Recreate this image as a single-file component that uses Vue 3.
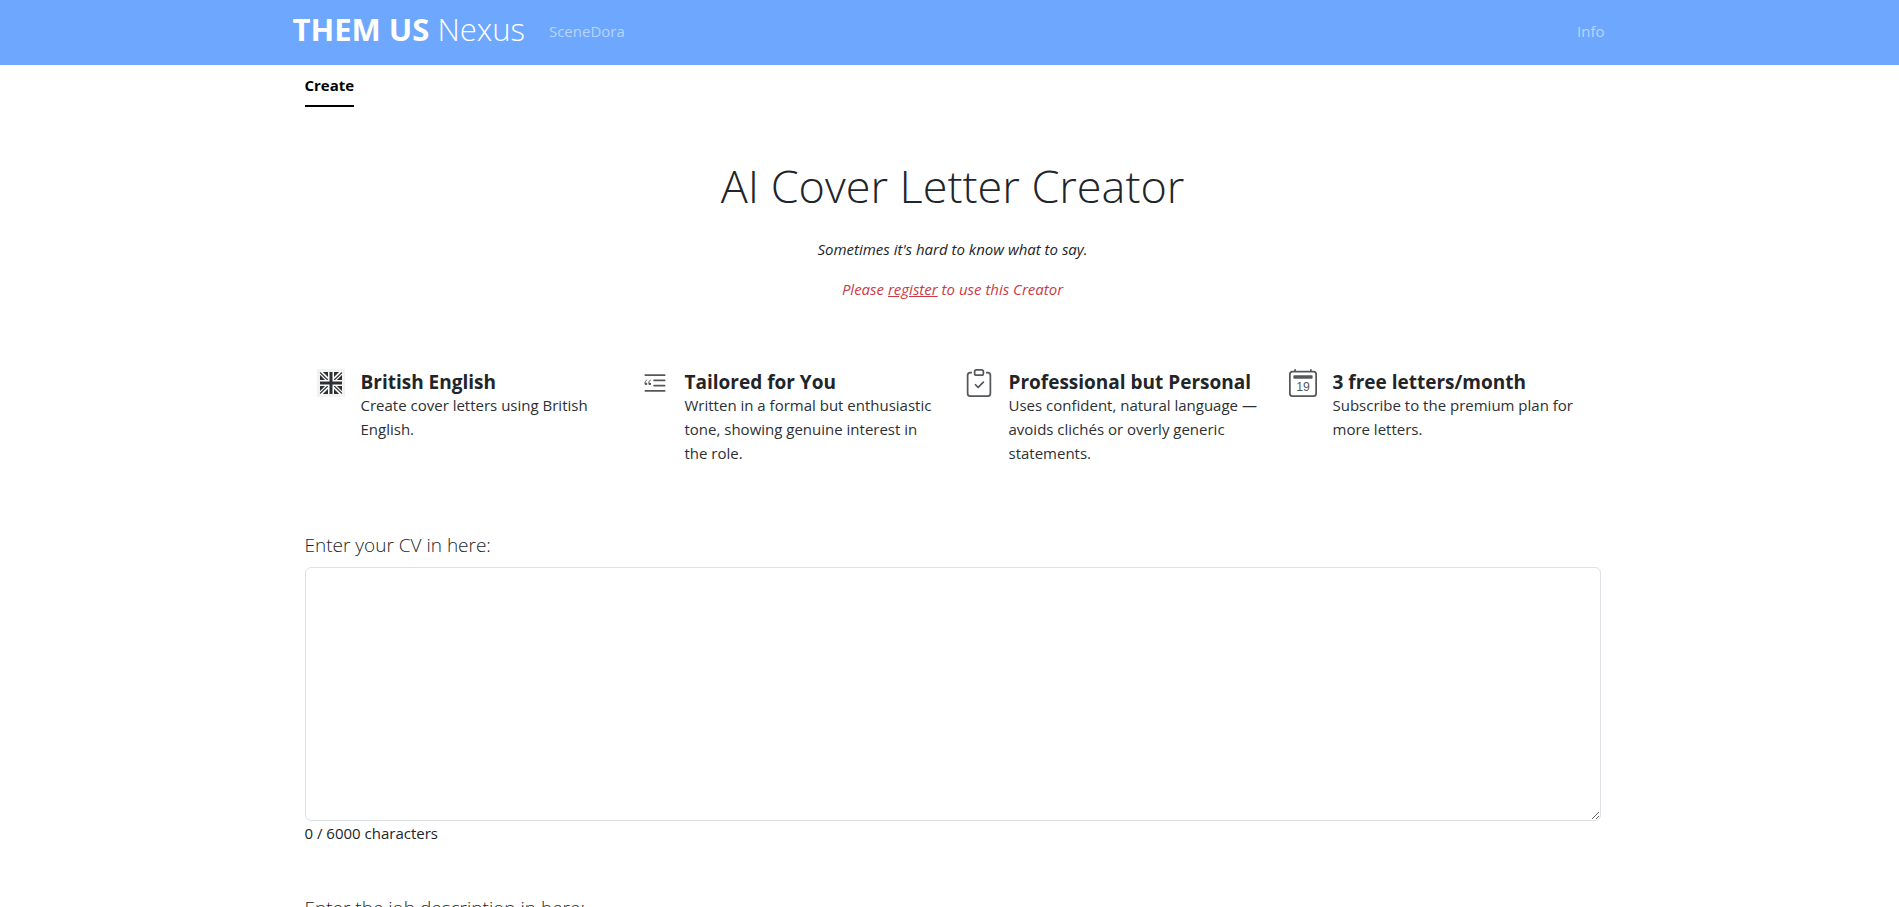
<script setup>
import { ref } from 'vue'

const cv = ref('')
const job = ref('')
const limit = 6000

const features = [
  { icon: 'flag', title: 'British English', text: 'Create cover letters using British English.' },
  { icon: 'quote', title: 'Tailored for You', text: 'Written in a formal but enthusiastic tone, showing genuine interest in the role.' },
  { icon: 'clipboard', title: 'Professional but Personal', text: 'Uses confident, natural language — avoids clichés or overly generic statements.' },
  { icon: 'calendar', title: '3 free letters/month', text: 'Subscribe to the premium plan for more letters.' },
]
</script>

<template>
  <div class="page">
    <header class="navbar">
      <nav class="container navbar-inner">
        <a class="brand" href="#"><strong>THEM US</strong> Nexus</a>
        <a class="nav-link" href="#">SceneDora</a>
        <a class="nav-link nav-end" href="#">Info</a>
      </nav>
    </header>

    <main class="container main">
      <nav class="tabs">
        <a class="tab" href="#">Create</a>
      </nav>

      <section class="hero">
        <h1>AI Cover Letter Creator</h1>
        <p>Sometimes it's hard to know what to say.</p>
        <p class="notice">Please <a href="#">register</a> to use this Creator</p>
      </section>

      <section class="features">
        <article v-for="f in features" :key="f.title" class="feature">
          <svg v-if="f.icon === 'flag'" class="icon" viewBox="0 0 28 28" aria-hidden="true">
            <rect width="28" height="28" fill="#f2f2f2" />
            <rect x="3" y="3" width="22" height="22" fill="#2e3033" />
            <path d="M3 3L25 25M25 3L3 25" stroke="#fff" stroke-width="4" />
            <path d="M3 3.500L25 24.500M25 3.500L3 24.500" stroke="#3b3e41" stroke-width="1.300" />
            <path d="M14 3V25M3 14H25" stroke="#fff" stroke-width="6" />
            <path d="M14 3V25M3 14H25" stroke="#2e3033" stroke-width="3" />
          </svg>
          <svg v-else-if="f.icon === 'quote'" class="icon" viewBox="0 0 16 16" fill="currentColor" aria-hidden="true">
            <path d="M2.500 3a.5.5 0 0 0 0 1h11a.5.5 0 0 0 0-1zm5 3a.5.5 0 0 0 0 1h6a.5.5 0 0 0 0-1zm0 3a.5.5 0 0 0 0 1h6a.5.5 0 0 0 0-1zm-5 3a.5.5 0 0 0 0 1h11a.5.5 0 0 0 0-1z" />
            <path id="quote-mark" d="M3.290 6.627q.168-.117.444-.275L3.524 6q-.183.111-.452.287-.27.176-.51.428a2.400 2.400 0 0 0-.398.562Q2 7.587 2 7.969q0 .54.217.873.217.328.72.328.322 0 .504-.211a.7.7 0 0 0 .188-.463q0-.345-.211-.521-.205-.182-.568-.182h-.282q.036-.305.123-.498a1.400 1.400 0 0 1 .252-.37 2 2 0 0 1 .346-.298z" />
            <use href="#quote-mark" x="2.168" />
          </svg>
          <svg v-else-if="f.icon === 'clipboard'" class="icon" viewBox="0 0 16 16" fill="currentColor" aria-hidden="true">
            <path d="M10.854 7.146a.5.5 0 0 1 0 .708l-3 3a.5.5 0 0 1-.708 0l-1.500-1.500a.5.5 0 1 1 .708-.708L7.500 9.793l2.646-2.647a.5.5 0 0 1 .708 0" />
            <path d="M4 1.500H3a2 2 0 0 0-2 2V14a2 2 0 0 0 2 2h10a2 2 0 0 0 2-2V3.500a2 2 0 0 0-2-2h-1v1h1a1 1 0 0 1 1 1V14a1 1 0 0 1-1 1H3a1 1 0 0 1-1-1V3.500a1 1 0 0 1 1-1h1z" />
            <path d="M9.500 1a.5.5 0 0 1 .5.5v1a.5.5 0 0 1-.5.5h-3a.5.5 0 0 1-.5-.5v-1a.5.5 0 0 1 .5-.5zm-3-1A1.500 1.500 0 0 0 5 1.500v1A1.500 1.500 0 0 0 6.500 4h3A1.500 1.500 0 0 0 11 2.500v-1A1.500 1.500 0 0 0 9.500 0z" />
          </svg>
          <svg v-else class="icon" viewBox="0 0 16 16" fill="currentColor" aria-hidden="true">
            <path d="M3.500 0a.5.5 0 0 1 .5.5V1h8V.5a.5.5 0 0 1 1 0V1h1a2 2 0 0 1 2 2v11a2 2 0 0 1-2 2H2a2 2 0 0 1-2-2V3a2 2 0 0 1 2-2h1V.5a.5.5 0 0 1 .5-.5M2 2a1 1 0 0 0-1 1v11a1 1 0 0 0 1 1h12a1 1 0 0 0 1-1V3a1 1 0 0 0-1-1z" />
            <path d="M2.500 4a.5.5 0 0 1 .5-.5h10a.5.5 0 0 1 .5.5v1a.5.5 0 0 1-.5.5H3a.5.5 0 0 1-.5-.5z" />
            <text class="day" x="8" y="12.700" text-anchor="middle">19</text>
          </svg>
          <div class="feature-body">
            <h2>{{ f.title }}</h2>
            <p>{{ f.text }}</p>
          </div>
        </article>
      </section>

      <form class="form" @submit.prevent>
        <div class="field">
          <label for="cv">Enter your CV in here:</label>
          <textarea id="cv" v-model="cv" rows="10" :maxlength="limit"></textarea>
          <span class="counter">{{ cv.length }} / {{ limit }} characters</span>
        </div>
        <div class="field">
          <label for="job">Enter the job description in here:</label>
          <textarea id="job" v-model="job" rows="10" :maxlength="limit"></textarea>
          <span class="counter">{{ job.length }} / {{ limit }} characters</span>
        </div>
      </form>
    </main>
  </div>
</template>

<style>
html {
  scrollbar-width: none;
}

body {
  margin: 0;
  background: #fff;
}
</style>

<style scoped>
.page {
  color: #212529;
  font-family: "Open Sans", "Noto Sans", sans-serif;
  font-size: 15px;
  line-height: 24px;
}

.page *,
.page *::before {
  box-sizing: border-box;
}

.navbar {
  padding-left: 6px;
  background: #6ea8fe;
}

.container {
  width: 100%;
  max-width: 1320px;
  margin: 0 auto;
}

.navbar-inner {
  display: flex;
  align-items: center;
  padding: 5px 8px 12px 0;
}

.brand {
  margin-right: 24px;
  color: #fff;
  font-size: 31px;
  font-weight: 300;
  line-height: 48px;
  text-decoration: none;
  white-space: nowrap;
}

.brand strong {
  font-weight: 700;
}

.nav-link {
  padding-top: 4px;
  color: #b6d4ff;
  text-decoration: none;
}

.nav-end {
  margin-left: auto;
}

.main {
  max-width: 1326px;
  padding: 0 12px 0 18px;
}

.tabs {
  display: flex;
  padding-top: 8px;
}

.tab {
  padding-bottom: 8px;
  border-bottom: 2px solid #000;
  color: #000;
  font-weight: 700;
  text-decoration: none;
}

.hero {
  padding-top: 50px;
  text-align: center;
}

.hero h1 {
  margin: 0 0 22px;
  font-size: 45px;
  font-weight: 300;
  line-height: 58px;
}

.hero p {
  margin: 0 0 16px;
  font-style: italic;
}

.hero .notice {
  margin: 0;
  color: #c93a4a;
}

.notice a {
  color: inherit;
}

.features {
  display: grid;
  grid-template-columns: repeat(4, 1fr);
  padding: 68px 0 65px;
}

.feature {
  display: flex;
  gap: 16px;
  padding: 0 12px;
}

.icon {
  flex: none;
  width: 28px;
  height: 28px;
  color: #55585b;
}

.day {
  font-family: "Liberation Sans", Arial, sans-serif;
  font-size: 7px;
}

.feature h2 {
  margin: 0;
  padding-top: 2px;
  font-size: 19px;
  font-weight: 700;
  line-height: 22px;
}

.feature p {
  margin: 0;
  color: #2c3034;
}

.field {
  display: flex;
  flex-direction: column;
  margin-bottom: 48px;
}

.field label {
  margin-bottom: 7px;
  font-size: 19px;
  font-weight: 300;
  line-height: 30px;
}

.field textarea {
  width: 100%;
  padding: 6px 12px;
  border: 1px solid #dee2e6;
  border-radius: 6px;
  background: #fff;
  color: inherit;
  font: inherit;
  height: 254px;
  resize: vertical;
}
</style>
